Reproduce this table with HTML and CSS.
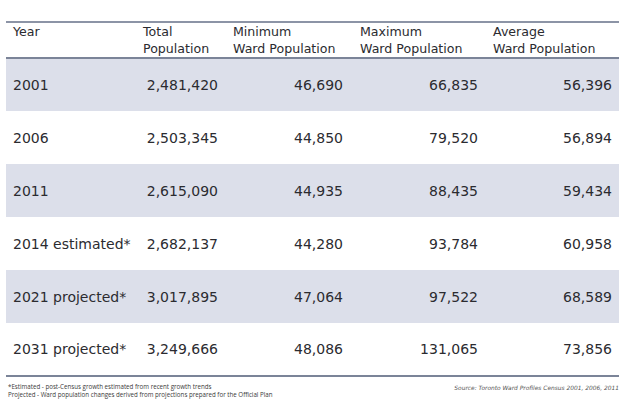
FILE: index.html
```html
<!DOCTYPE html>
<html lang="en">
<head>
  <meta charset="UTF-8" />
  <title>Toronto Ward Population</title>
  <link rel="stylesheet" href="styles.css">
</head>
<body>

  <main class="wrap">
    <table class="pop-table">
      <thead>
        <tr>
          <th class="c-year">Year</th>
          <th class="c-total">Total<br>Population</th>
          <th class="c-min">Minimum<br>Ward Population</th>
          <th class="c-max">Maximum<br>Ward Population</th>
          <th class="c-avg">Average<br>Ward Population</th>
        </tr>
      </thead>
      <tbody>
        <tr class="shade">
          <td>2001</td><td>2,481,420</td><td>46,690</td><td>66,835</td><td>56,396</td>
        </tr>
        <tr>
          <td>2006</td><td>2,503,345</td><td>44,850</td><td>79,520</td><td>56,894</td>
        </tr>
        <tr class="shade">
          <td>2011</td><td>2,615,090</td><td>44,935</td><td>88,435</td><td>59,434</td>
        </tr>
        <tr>
          <td>2014 estimated*</td><td>2,682,137</td><td>44,280</td><td>93,784</td><td>60,958</td>
        </tr>
        <tr class="shade">
          <td>2021 projected*</td><td>3,017,895</td><td>47,064</td><td>97,522</td><td>68,589</td>
        </tr>
        <tr>
          <td>2031 projected*</td><td>3,249,666</td><td>48,086</td><td>131,065</td><td>73,856</td>
        </tr>
      </tbody>
    </table>

    <footer class="notes">
      <div class="notes-left">
        <p>*Estimated - post-Census growth estimated from recent growth trends</p>
        <p>Projected - Ward population changes derived from projections prepared for the Official Plan</p>
      </div>
      <p class="source">Source: Toronto Ward Profiles Census 2001, 2006, 2011</p>
    </footer>
  </main>

</body>
</html>
```

FILE: styles.css
```css
* {
  box-sizing: border-box;
}

body {
  margin: 0;
  background: #ffffff;
  color: #2b2b30;
  font-family: "DejaVu Sans", Verdana, sans-serif;
}

.wrap {
  width: 613px;
  margin: 21px 0 0 6px;
}

/* Tableau principal */
.pop-table {
  width: 100%;
  border-collapse: collapse;
  table-layout: fixed;
}

.pop-table th {
  font-weight: normal;
  font-size: 12.6px;
  line-height: 17px;
  text-align: left;
  vertical-align: top;
  height: 36px;
  padding: 0 0 0 7px;
  border-top: 2px solid #8c94a6;
  border-bottom: 2px solid #7b8498;
  white-space: nowrap;
}

.c-year  { width: 130px; }
.c-total { width: 90px; }
.c-min   { width: 127px; }
.c-max   { width: 133px; }
.c-avg   { width: 133px; }

.pop-table td {
  font-size: 14px;
  height: 53px;
  padding: 0 8px 0 7px;
  text-align: right;
  vertical-align: middle;
  white-space: nowrap;
}

.pop-table td:first-child {
  text-align: left;
  padding-right: 0;
}

.pop-table td:nth-child(3) {
  padding-right: 10px;
}

.pop-table td:last-child {
  padding-right: 7px;
}

.pop-table tr.shade td {
  background: #dcdfea;
}

.pop-table tbody tr:last-child td {
  border-bottom: 2px solid #7b8498;
}

/* Notes de bas de page */
.notes {
  display: flex;
  justify-content: space-between;
  align-items: flex-start;
  padding: 6px 0 0 2px;
}

.notes p {
  margin: 0;
}

.notes-left {
  font-family: "Open Sans", sans-serif;
  font-size: 6.2px;
  line-height: 8px;
  color: #3a3a3a;
}

.source {
  font-size: 5.9px;
  line-height: 8px;
  font-style: italic;
  color: #555555;
  padding-top: 1px;
}
```
